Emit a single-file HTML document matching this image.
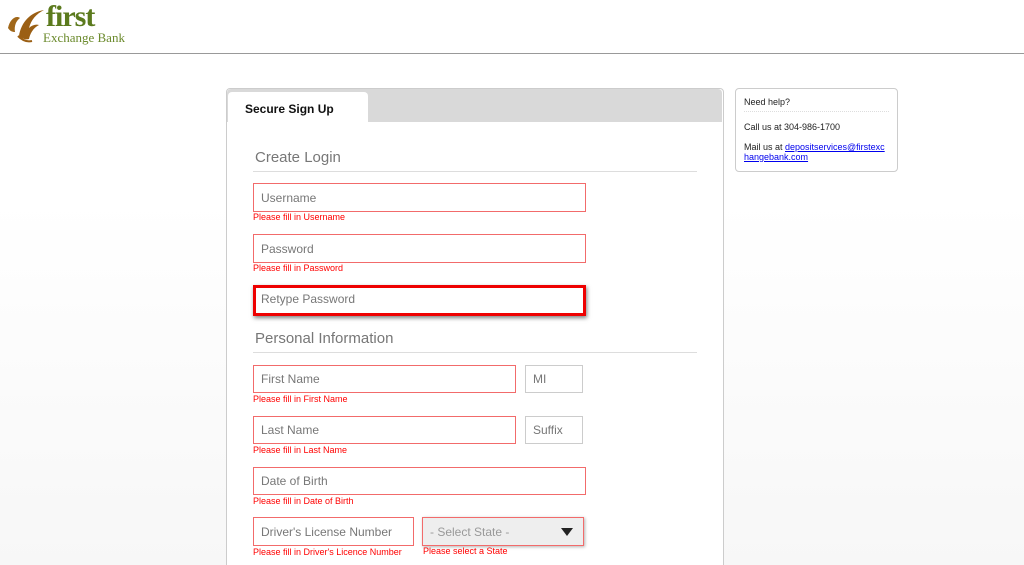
<!DOCTYPE html>
<html style="overflow:hidden;height:565px"><head><style>
body{margin:0;width:1024px;height:565px;overflow:hidden;background:linear-gradient(#fff 55px,#fff 200px,#f7f7f7 565px);font-family:"Liberation Sans",Arial,sans-serif;position:relative}
.a{position:absolute}
.hdr{left:0;top:0;width:1024px;height:53px;background:#fff;border-bottom:1px solid #999}
.panel{left:226px;top:88px;width:496px;height:490px;background:#fff;border:1px solid #ccc;border-radius:4px}
.bar{left:227px;top:89px;width:495px;height:33px;background:#d9d9d9;border-radius:4px 4px 0 0}
.tab{left:228px;top:92px;width:140px;height:31px;background:#fff;border-radius:4px 4px 0 0;font-size:12px;font-weight:bold;color:#111;line-height:34px;padding-left:17px;box-sizing:border-box}
.h{font-size:15px;color:#777;left:255px}
.ln{left:253px;width:444px;height:0;border-top:1px solid #ddd}
.in{box-sizing:border-box;border:1px solid #f26b6b;font-size:12px;color:#777;padding-left:7px;display:flex;align-items:center;background:#fff}
.g{border-color:#ccc}
.e{font-size:9px;color:#f00;left:253px}
</style></head><body>
<div class="a hdr"></div>
<svg class="a" style="left:4px;top:6px" width="40" height="40" viewBox="0 0 40 40"><path d="M4 22c2-9 8-13 12-10-4 3-6 8-5 14-3 0-5-1-7-4z" fill="#a0671a"/><path d="M15 30c2-14 12-24 25-26-8 4-13 10-15 18 3-3 7-4 10-3-6 3-9 9-10 14-3 1-7 0-10-3z" fill="#9b5f14"/><path d="M14 30c5 5 10 6 14 5" stroke="#9b5f14" stroke-width="2" fill="none"/></svg>
<div class="a" style="left:46px;top:2px;font-family:'Liberation Serif',serif;font-size:30px;font-weight:bold;color:#5b7a1d;letter-spacing:-1px;line-height:30px">first</div>
<div class="a" style="left:43px;top:30px;font-family:'Liberation Serif',serif;font-size:13px;color:#6b8a2c">Exchange Bank</div>
<div class="a panel"></div><div class="a bar"></div><div class="a tab">Secure Sign Up</div>
<div class="a h" style="top:149px">Create Login</div><div class="a ln" style="top:171px"></div>
<div class="a in" style="left:253px;top:183px;width:333px;height:29px">Username</div>
<div class="a e" style="top:212px">Please fill in Username</div>
<div class="a in" style="left:253px;top:234px;width:333px;height:29px">Password</div>
<div class="a e" style="top:263px">Please fill in Password</div>
<div class="a in" style="left:253px;top:285px;width:333px;height:31px;border:3px solid #e00;box-shadow:1px 2px 4px rgba(0,0,0,.5);padding-left:5px;padding-bottom:3px">Retype Password</div>
<div class="a h" style="top:330px">Personal Information</div><div class="a ln" style="top:352px"></div>
<div class="a in" style="left:253px;top:365px;width:263px;height:28px">First Name</div>
<div class="a in g" style="left:525px;top:365px;width:58px;height:28px">MI</div>
<div class="a e" style="top:394px">Please fill in First Name</div>
<div class="a in" style="left:253px;top:416px;width:263px;height:28px">Last Name</div>
<div class="a in g" style="left:525px;top:416px;width:58px;height:28px">Suffix</div>
<div class="a e" style="top:445px">Please fill in Last Name</div>
<div class="a in" style="left:253px;top:467px;width:333px;height:28px">Date of Birth</div>
<div class="a e" style="top:496px">Please fill in Date of Birth</div>
<div class="a in" style="left:253px;top:517px;width:161px;height:29px">Driver's License Number</div>
<div class="a e" style="top:547px">Please fill in Driver's Licence Number</div>
<div class="a in" style="left:422px;top:517px;width:162px;height:29px;background:#eee;color:#999;box-shadow:1px 1px 3px rgba(0,0,0,.3)">- Select State -<span style="position:absolute;right:10px;top:10px;width:0;height:0;border-left:6px solid transparent;border-right:6px solid transparent;border-top:8px solid #222"></span></div>
<div class="a e" style="left:423px;top:546px">Please select a State</div>
<div class="a" style="left:735px;top:88px;width:161px;height:82px;border:1px solid #ccc;border-radius:4px;background:#fff;font-size:9px;color:#222">
<div style="margin:8px 8px 0 8px;padding-bottom:4px;border-bottom:1px dotted #ddd">Need help?</div>
<div style="margin:10px 8px 0 8px">Call us at 304-986-1700</div>
<div style="margin:10px 8px 0 8px;line-height:10px;word-break:break-all">Mail us at <span style="color:#00e;text-decoration:underline">depositservices@firstexchangebank.com</span></div>
</div>
</body></html>
